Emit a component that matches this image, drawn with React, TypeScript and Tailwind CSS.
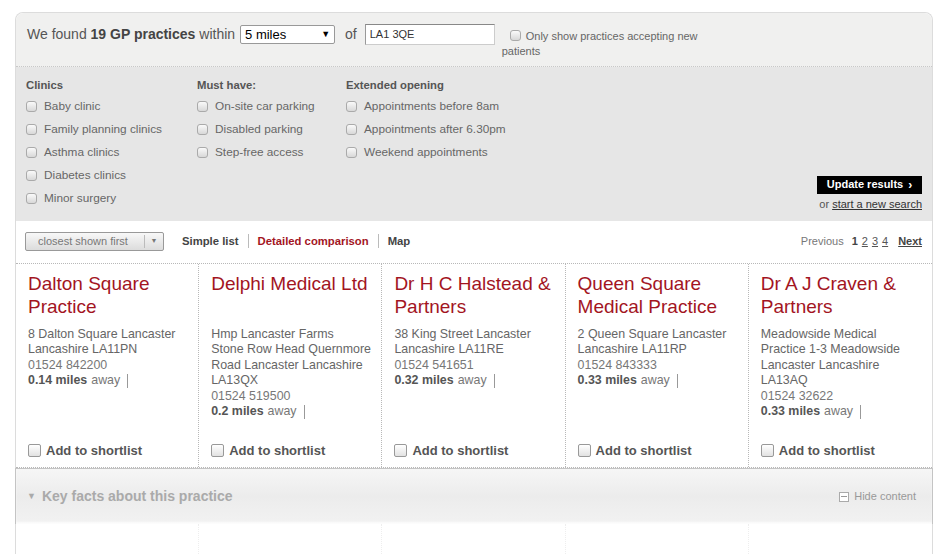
import React from 'react'

const CLINICS = ['Baby clinic', 'Family planning clinics', 'Asthma clinics', 'Diabetes clinics', 'Minor surgery']
const MUST_HAVE = ['On-site car parking', 'Disabled parking', 'Step-free access']
const EXTENDED = ['Appointments before 8am', 'Appointments after 6.30pm', 'Weekend appointments']

const PRACTICES = [
  { name: 'Dalton Square Practice', address: ['8 Dalton Square Lancaster', 'Lancashire LA11PN'], phone: '01524 842200', miles: '0.14' },
  { name: 'Delphi Medical Ltd', address: ['Hmp Lancaster Farms', 'Stone Row Head Quernmore', 'Road Lancaster Lancashire', 'LA13QX'], phone: '01524 519500', miles: '0.2' },
  { name: 'Dr H C Halstead & Partners', address: ['38 King Street Lancaster', 'Lancashire LA11RE'], phone: '01524 541651', miles: '0.32' },
  { name: 'Queen Square Medical Practice', address: ['2 Queen Square Lancaster', 'Lancashire LA11RP'], phone: '01524 843333', miles: '0.33' },
  { name: 'Dr A J Craven & Partners', address: ['Meadowside Medical', 'Practice 1-3 Meadowside', 'Lancaster Lancashire', 'LA13AQ'], phone: '01524 32622', miles: '0.33' },
]

function Tick({ big }: { big?: boolean }) {
  return (
    <span
      className={
        big
          ? 'inline-block w-[13px] h-[13px] shrink-0 rounded-[2px] border border-[#999] bg-gradient-to-b from-white to-[#e2e2e2]'
          : 'inline-block w-[11px] h-[11px] shrink-0 rounded-[3px] border border-[#aaa] bg-gradient-to-b from-[#fafafa] to-[#d8d8d8]'
      }
    />
  )
}

function FilterColumn({ title, items, width }: { title: string; items: string[]; width: string }) {
  return (
    <div className={width}>
      <div className="text-[11.3px] font-bold text-[#555] leading-[14px] mb-[7px]">{title}</div>
      <div className="flex flex-col gap-[9px]">
        {items.map(item => (
          <label key={item} className="flex items-center gap-[7px] text-[11.8px] leading-[14px] text-[#666]">
            <Tick />
            {item}
          </label>
        ))}
      </div>
    </div>
  )
}

export default function App() {
  return (
    <div className="w-[946px] h-[555px] overflow-hidden bg-white pt-[12px] pl-[15px] font-['Liberation_Sans',Arial,sans-serif]">
      <div className="w-[918px] rounded-t-[8px] border-x border-t border-[#dcdcdc]">
        {/* search bar */}
        <div className="h-[54px] rounded-t-[8px] bg-[#f0f0ef] border-b border-dotted border-[#c8c8c8] flex items-start pl-[11px] pt-[11px]">
          <div className="flex items-center h-[21px] text-[14px] text-[#555]">
            <span>We found <b className="text-[#444]">19 GP practices</b> within</span>
            <div className="ml-[5px] w-[95px] h-[19px] bg-white border border-[#999] rounded-[2px] flex items-center justify-between px-[4px] text-[13px] text-black">
              <span>5 miles</span>
              <span className="text-[9px]">▼</span>
            </div>
            <span className="ml-[10px]">of</span>
            <div className="ml-[8px] w-[130px] h-[21px] bg-white border border-[#ccc] border-t-[#888] border-l-[#999] flex items-center pl-[4px] text-[11px] text-[#333]">
              LA1 3QE
            </div>
          </div>
          <div className="ml-[7px] w-[218px] pt-[5px] text-[11px] leading-[14px] text-[#666]">
            <span className="ml-[8px] mr-[5px] inline-block align-[-1px]"><Tick /></span>
            Only show practices accepting new patients
          </div>
        </div>

        {/* filters */}
        <div className="h-[154px] bg-[#e6e6e6] pl-[10px] pr-[10px] pt-[11px] flex">
          <FilterColumn title="Clinics" items={CLINICS} width="w-[171px]" />
          <FilterColumn title="Must have:" items={MUST_HAVE} width="w-[149px]" />
          <FilterColumn title="Extended opening" items={EXTENDED} width="w-[200px]" />
          <div className="flex-1 flex flex-col items-end justify-end pb-[9px]">
            <button className="h-[18px] w-[105px] bg-black text-white text-[11px] font-bold flex items-center justify-center gap-[5px]">
              Update results <span className="text-[12px] leading-none">›</span>
            </button>
            <div className="mt-[2px] text-[11px] text-[#555]">
              or <span className="underline text-[#333]">start a new search</span>
            </div>
          </div>
        </div>

        {/* sort bar */}
        <div className="h-[42px] flex items-center pl-[9px] pr-[10px] pb-[2px] text-[11px]">
          <div className="w-[139px] h-[19px] rounded-[2px] border border-[#999] bg-gradient-to-b from-[#f8f8f8] to-[#dcdcdc] flex items-center text-[#777]">
            <span className="w-[119px] pl-[12px] border-r border-[#bbb] leading-[13px]">closest shown first</span>
            <span className="flex-1 text-center text-[7px] text-[#777]">▼</span>
          </div>
          <div className="ml-[18px] flex items-center font-bold text-[#444] text-[11.3px]">
            <span>Simple list</span>
            <span className="mx-[9px] w-px h-[14px] bg-[#bbb]" />
            <span className="text-[#a3151f]">Detailed comparison</span>
            <span className="mx-[9px] w-px h-[14px] bg-[#bbb]" />
            <span>Map</span>
          </div>
          <div className="ml-auto flex items-center text-[#777]">
            <span className="mr-[8px]">Previous</span>
            <b className="text-[#444] mr-[4px]">1</b>
            <span className="underline text-[#555] mr-[4px]">2</span>
            <span className="underline text-[#555] mr-[4px]">3</span>
            <span className="underline text-[#555] mr-[10px]">4</span>
            <b className="underline text-[#444]">Next</b>
          </div>
        </div>

        {/* cards */}
        <div className="grid grid-cols-5 h-[205px] border-t border-b border-dotted border-[#b8b8b8]">
          {PRACTICES.map((p, i) => (
            <div
              key={p.name}
              className={
                'flex flex-col pl-[12px] pr-[4px] pt-[8px] pb-[7px] ' +
                (i < 4 ? 'border-r border-dotted border-[#b8b8b8]' : '')
              }
            >
              <div className="h-[46px] text-[19px] leading-[23px] text-[#a3151f]">{p.name}</div>
              <div className="mt-[9px] text-[12.4px] leading-[15.4px] text-[#666]">
                {p.address.map(line => (
                  <div key={line}>{line}</div>
                ))}
                <div className="text-[#777]">{p.phone}</div>
                <div className="flex items-center">
                  <b className="text-[#555]">{p.miles} miles</b>
                  <span className="ml-[4px] text-[#777]">away</span>
                  <span className="ml-[7px] w-px h-[14px] bg-[#999]" />
                </div>
              </div>
              <label className="mt-auto flex items-center gap-[5px] text-[13px] font-bold text-[#555]">
                <Tick big />
                Add to shortlist
              </label>
            </div>
          ))}
        </div>

        {/* key facts */}
        <div className="h-[56px] -mx-px border-x border-t border-[#c4c4c4] bg-gradient-to-b from-[#f6f6f6] via-[#ececec] to-[#f2f2f2] flex items-center pl-[11px] pr-[16px] shadow-[inset_0_-2px_2px_rgba(255,255,255,0.8)]">
          <span className="text-[9px] text-[#aaa] mr-[6px]">▼</span>
          <span className="text-[14px] font-bold text-[#aaa]">Key facts about this practice</span>
          <div className="ml-auto flex items-center gap-[5px] text-[11px] text-[#999]">
            <span className="w-[10px] h-[10px] border border-[#aaa] bg-white flex items-center justify-center">
              <span className="w-[6px] h-px bg-[#999]" />
            </span>
            Hide content
          </div>
        </div>
        <div className="grid grid-cols-5 h-[30px]">
          {PRACTICES.map((p, i) => (
            <div key={p.name} className={i < 4 ? 'border-r border-dotted border-[#eee]' : ''} />
          ))}
        </div>
      </div>
    </div>
  )
}
